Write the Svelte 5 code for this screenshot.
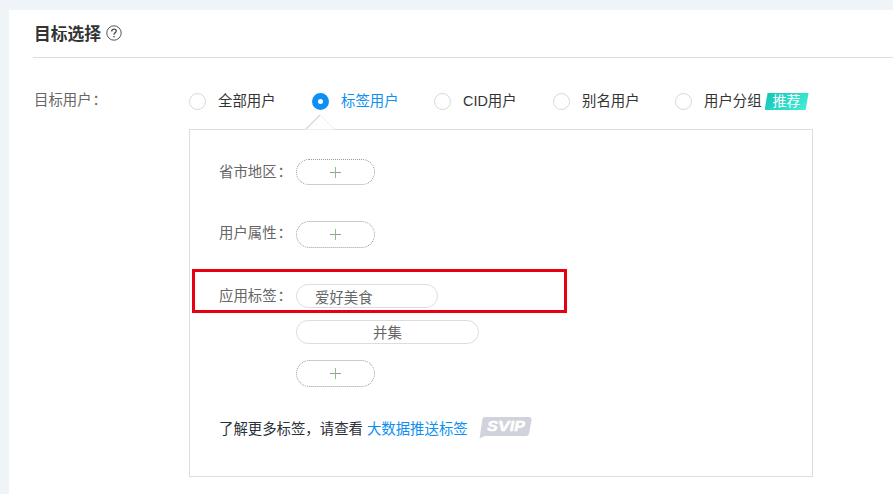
<script>
  const options = ['全部用户', '标签用户', 'CID用户', '别名用户', '用户分组'];
  let selected = $state(1);
</script>

{#snippet plus()}
  <button class="add" aria-label="添加">
    <svg width="13" height="13" viewBox="0 0 13 13"><path d="M1 6.5H12" stroke="#9a9a9a" /><path d="M6.5 1V12" stroke="#8fbc8b" /></svg>
  </button>
{/snippet}

<main>
  <section class="card">
    <header>
      <h1>目标选择</h1>
      <svg class="help" width="16" height="16" viewBox="0 0 16 16" fill="none" stroke="#555">
        <circle cx="8" cy="8" r="7.2" />
        <path d="M5.7 6.4C5.7 3.3 10.4 3.5 10.2 6.2C10.1 7.6 8 7.8 8 9.7" stroke-width="1.4" />
        <path d="M8 10.9V12.3" stroke-width="1.5" />
      </svg>
    </header>
    <div class="form">
      <div class="label">目标用户<span class="colon">：</span></div>
      <div class="content">
        <div class="options">
          {#each options as name, i}
            <button class="option" class:active={selected === i} onclick={() => (selected = i)}>
              <i class="radio"></i><span class="caption">{name}</span>
              {#if i === 4}<b class="badge"><span>推荐</span></b>{/if}
            </button>
          {/each}
        </div>
        <div class="panel">
          <svg class="arrow" width="30" height="16" viewBox="0 0 30 16">
            <path d="M1 15L15 1L29 15V15.5H1Z" fill="#fff" />
            <path d="M1 15L15 1" stroke="#dcdce4" stroke-width="1.7" />
            <path d="M15 1L29 15" stroke="#e5e5eb" stroke-width=".8" />
          </svg>
          <div class="row first"><span class="name">省市地区<span class="colon">：</span></span>{@render plus()}</div>
          <div class="row second"><span class="name">用户属性<span class="colon">：</span></span>{@render plus()}</div>
          <div class="row tags">
            <span class="name">应用标签<span class="colon">：</span></span>
            <div class="stack">
              <div class="pill tag">爱好美食</div>
              <div class="pill union">并集</div>
              {@render plus()}
            </div>
            <div class="highlight"></div>
          </div>
          <div class="more">
            <span>了解更多标签，请查看</span><a href="#tags">大数据推送标签</a>
            <svg class="svip" width="53" height="23" viewBox="0 0 53 23">
              <path d="M6 1H50Q53 1 52.5 4L50.2 17Q49.8 20 47 20H6L.5 22.5L3.3 4Q3.8 1 6 1Z" fill="#d0d3dc" />
              <text x="8" y="15.3" textLength="38" lengthAdjust="spacingAndGlyphs">SVIP</text>
            </svg>
          </div>
        </div>
      </div>
    </div>
  </section>
</main>

<style>
  :global(body) { background: #eff4f8; overflow: hidden; }
  main {
    box-sizing: border-box; height: 494px; padding: 10px 0 0 9px;
    font: 14.4px/20px "Noto Sans CJK SC", sans-serif; color: #333;
  }
  .card { box-sizing: border-box; height: 484px; padding-left: 24px; background: #fff; }
  header {
    box-sizing: border-box; height: 48px; display: flex; align-items: center;
    gap: 5px; border-bottom: 1px solid #dcdde2;
  }
  h1 { margin: 0 0 2px 1px; font-size: 16.8px; line-height: 22px; font-weight: 700; }
  .help { margin-top: -1px; }
  .form { display: flex; padding-top: 32px; }
  .label { width: 155px; padding-left: 1px; margin-top: -1px; color: #666; }
  .colon { display: inline-block; margin-left: 1px; }
  .content { width: 624px; }
  button { font: inherit; color: inherit; background: none; border: 0; padding: 0; cursor: pointer; }
  .options { height: 39px; display: grid; grid-template-columns: 123px 122px 119px 122px auto; align-items: start; }
  .option { height: 23px; display: flex; align-items: center; white-space: nowrap; font-family: "Liberation Sans", "Noto Sans CJK SC", sans-serif; }
  .caption { margin-bottom: 1px; }
  .radio { box-sizing: border-box; width: 17px; height: 17px; margin-right: 12px; border: 1px solid #d8d8d8; border-radius: 50%; }
  .active { color: #0e8ff0; }
  .active .radio { border: 6px solid #0e90f2; }
  .badge {
    width: 44px; height: 17px; margin-left: 3px; display: flex; justify-content: center; align-items: center;
    clip-path: polygon(3px 0, 100% 0, 41px 100%, 0 100%);
    background: linear-gradient(135deg, #10c5b5, #43efda); color: #fff; font-weight: 400;
  }
  .badge span { margin-bottom: 1px; font-size: 14px; line-height: 17px; }
  .panel { position: relative; box-sizing: border-box; width: 624px; height: 348px; padding: 29px 0 0 29px; border: 1px solid #dcdce4; }
  .arrow { position: absolute; left: 115px; top: -16px; }
  .row { position: relative; display: flex; align-items: flex-start; height: 62px; color: #666; }
  .name { width: 77px; margin-top: 2px; white-space: nowrap; }
  .second { height: 63px; }
  .second .name, .tags .name { margin-top: 1px; }
  .add { box-sizing: border-box; width: 79px; height: 27px; display: flex; align-items: center; justify-content: center; border: 1px dotted #999; border-radius: 14px; }
  .first .add { height: 26px; }
  .tags { height: 132px; }
  .stack { display: flex; flex-direction: column; }
  .pill { box-sizing: border-box; height: 24px; border: 1px solid #dcdce4; border-radius: 12px; line-height: 23px; }
  .tag { width: 142px; padding-left: 18px; margin-bottom: 12px; }
  .union { width: 183px; text-align: center; margin-bottom: 16px; line-height: 22px; }
  .highlight { position: absolute; left: -27px; top: -15px; box-sizing: border-box; width: 375px; height: 44px; border: 3px solid #e60012; }
  .more { display: flex; align-items: flex-start; color: #29303a; }
  .more > span, .more a { margin-top: 2px; }
  .more a { margin-left: 4px; color: #0e8ff0; text-decoration: none; }
  .svip { margin-left: 11px; }
  .svip text { font: italic 600 13px "Inter", sans-serif; fill: #fff; stroke: #fff; stroke-width: .5; }
</style>
